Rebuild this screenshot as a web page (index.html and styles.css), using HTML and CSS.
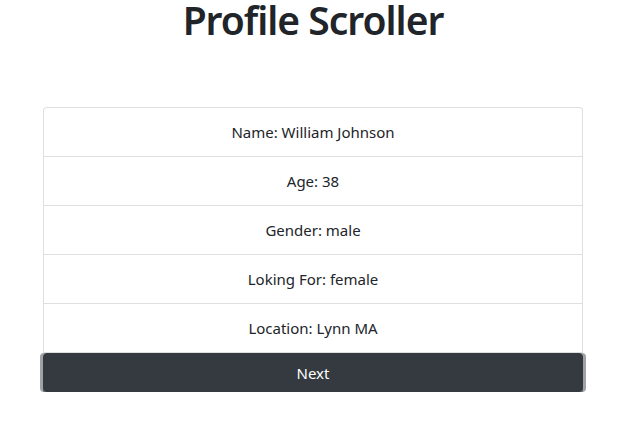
FILE: index.html
```html
<!DOCTYPE html>
<html>
<head>
<meta charset="utf-8">
<link rel="stylesheet" href="styles.css">
</head>
<body>
<div class="page">
  <h1 class="title">Profile Scroller</h1>
  <div class="container">
    <ul class="list">
      <li class="item">Name: William Johnson</li>
      <li class="item">Age: 38</li>
      <li class="item">Gender: male</li>
      <li class="item">Loking For: female</li>
      <li class="item">Location: Lynn MA</li>
    </ul>
    <button class="btn">Next</button>
  </div>
</div>
</body>
</html>
```
FILE: styles.css
```css
html, body {
  margin: 0;
  padding: 0;
  background: #fff;
}
body {
  font-family: "Noto Sans", "Open Sans", sans-serif;
  font-size: 15px;
  line-height: 1.5;
  color: #212529;
}
.page {
  display: flex;
  flex-direction: column;
  align-items: center;
}
.title {
  margin: 0;
  font-size: 39px;
  font-weight: 600;
  letter-spacing: -1px;
  line-height: 40px;
  padding-bottom: 4px;
  color: #212529;
}
.container {
  width: 540px;
  margin-top: 63px;
  display: flex;
  flex-direction: column;
}
.list {
  list-style: none;
  margin: 0;
  padding: 0;
  border: 1px solid rgba(0,0,0,.125);
  border-bottom: none;
  border-radius: 4px 4px 0 0;
}
.item {
  padding: 12px 20px;
  text-align: center;
  border-bottom: 1px solid rgba(0,0,0,.125);
  line-height: 24px;
}
.btn {
  font-family: inherit;
  font-size: 15px;
  line-height: 24px;
  padding: 6.5px 12px;
  color: #fff;
  background: #343a40;
  border: 1px solid #343a40;
  border-radius: 4px;
  box-shadow: -3px 0 0 0 rgba(82,88,93,.55), 3px 0 0 0 rgba(82,88,93,.55), 0 3px 0 0 rgba(82,88,93,.55);
  cursor: pointer;
}
```
